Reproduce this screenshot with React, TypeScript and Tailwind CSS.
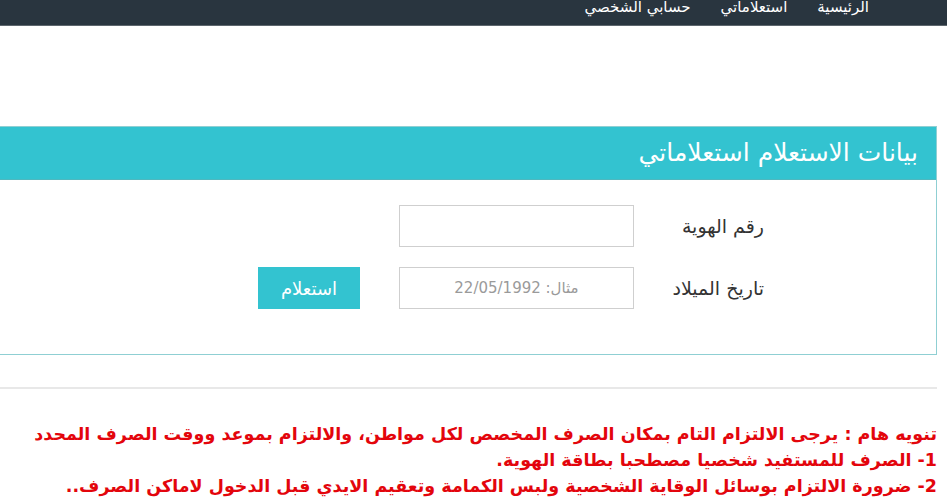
import React from 'react';

const arabic = { fontFamily: '"DejaVu Sans", "Noto Sans", sans-serif' };

function TopBar() {
  return (
    <div className="h-[26px] bg-[#29353f] border-b border-[#5d666d] overflow-hidden">
      <div className="flex items-start gap-[30px] pr-[78px] text-white text-[15px] leading-[20px] -mt-[3px]">
        <span>الرئيسية</span>
        <span>استعلاماتي</span>
        <span>حسابي الشخصي</span>
      </div>
    </div>
  );
}

function FormRow({ label, children }: { label: string; children: React.ReactNode }) {
  return (
    <div className="flex items-center">
      <div className="w-[302px] shrink-0 pr-[172px] text-[19px] text-[#333] whitespace-nowrap">
        {label}
      </div>
      {children}
    </div>
  );
}

export default function App() {
  return (
    <div dir="rtl" className="w-[947px] h-[500px] bg-white overflow-hidden" style={arabic}>
      <TopBar />

      <div className="flex justify-start pr-[10px] mt-[100px]">
        <div className="w-[941px] shrink-0">
          {/* Panel */}
          <div className="border border-[#8fcfd3] bg-white">
            <div className="h-[53px] bg-[#33c3d0] border-b border-[#4fb8bf] flex items-center pr-[18px]">
              <h2 className="text-white text-[25px] font-normal whitespace-nowrap">
                بيانات الاستعلام استعلاماتي
              </h2>
            </div>
            <div className="pt-[25px] pb-[45px] flex flex-col gap-[20px]">
              <FormRow label="رقم الهوية">
                <input className="w-[235px] h-[42px] border border-[#cfcfcf] bg-white outline-none" />
              </FormRow>
              <FormRow label="تاريخ الميلاد">
                <input
                  className="w-[235px] h-[42px] border border-[#cfcfcf] bg-white text-center text-[15px] placeholder:text-[#9a9a9a] outline-none"
                  style={arabic}
                  placeholder="مثال: 22/05/1992"
                />
                <button className="mr-[39px] w-[102px] h-[42px] bg-[#33c3d0] text-white text-[18px]" style={arabic}>
                  استعلام
                </button>
              </FormRow>
            </div>
          </div>

          <div className="mt-[32px] h-[2px] bg-[#e8e8e8]" />

          {/* Notice */}
          <div className="mt-[32px] text-[#e3050c] font-bold text-[17.5px] leading-[26px] whitespace-nowrap">
            <p>تنويه هام : يرجى الالتزام التام بمكان الصرف المخصص لكل مواطن، والالتزام بموعد ووقت الصرف المحدد</p>
            <p>1- الصرف للمستفيد شخصيا مصطحبا بطاقة الهوية.</p>
            <p>2- ضرورة الالتزام بوسائل الوقاية الشخصية ولبس الكمامة وتعقيم الايدي قبل الدخول لاماكن الصرف..</p>
          </div>
        </div>
      </div>
    </div>
  );
}
